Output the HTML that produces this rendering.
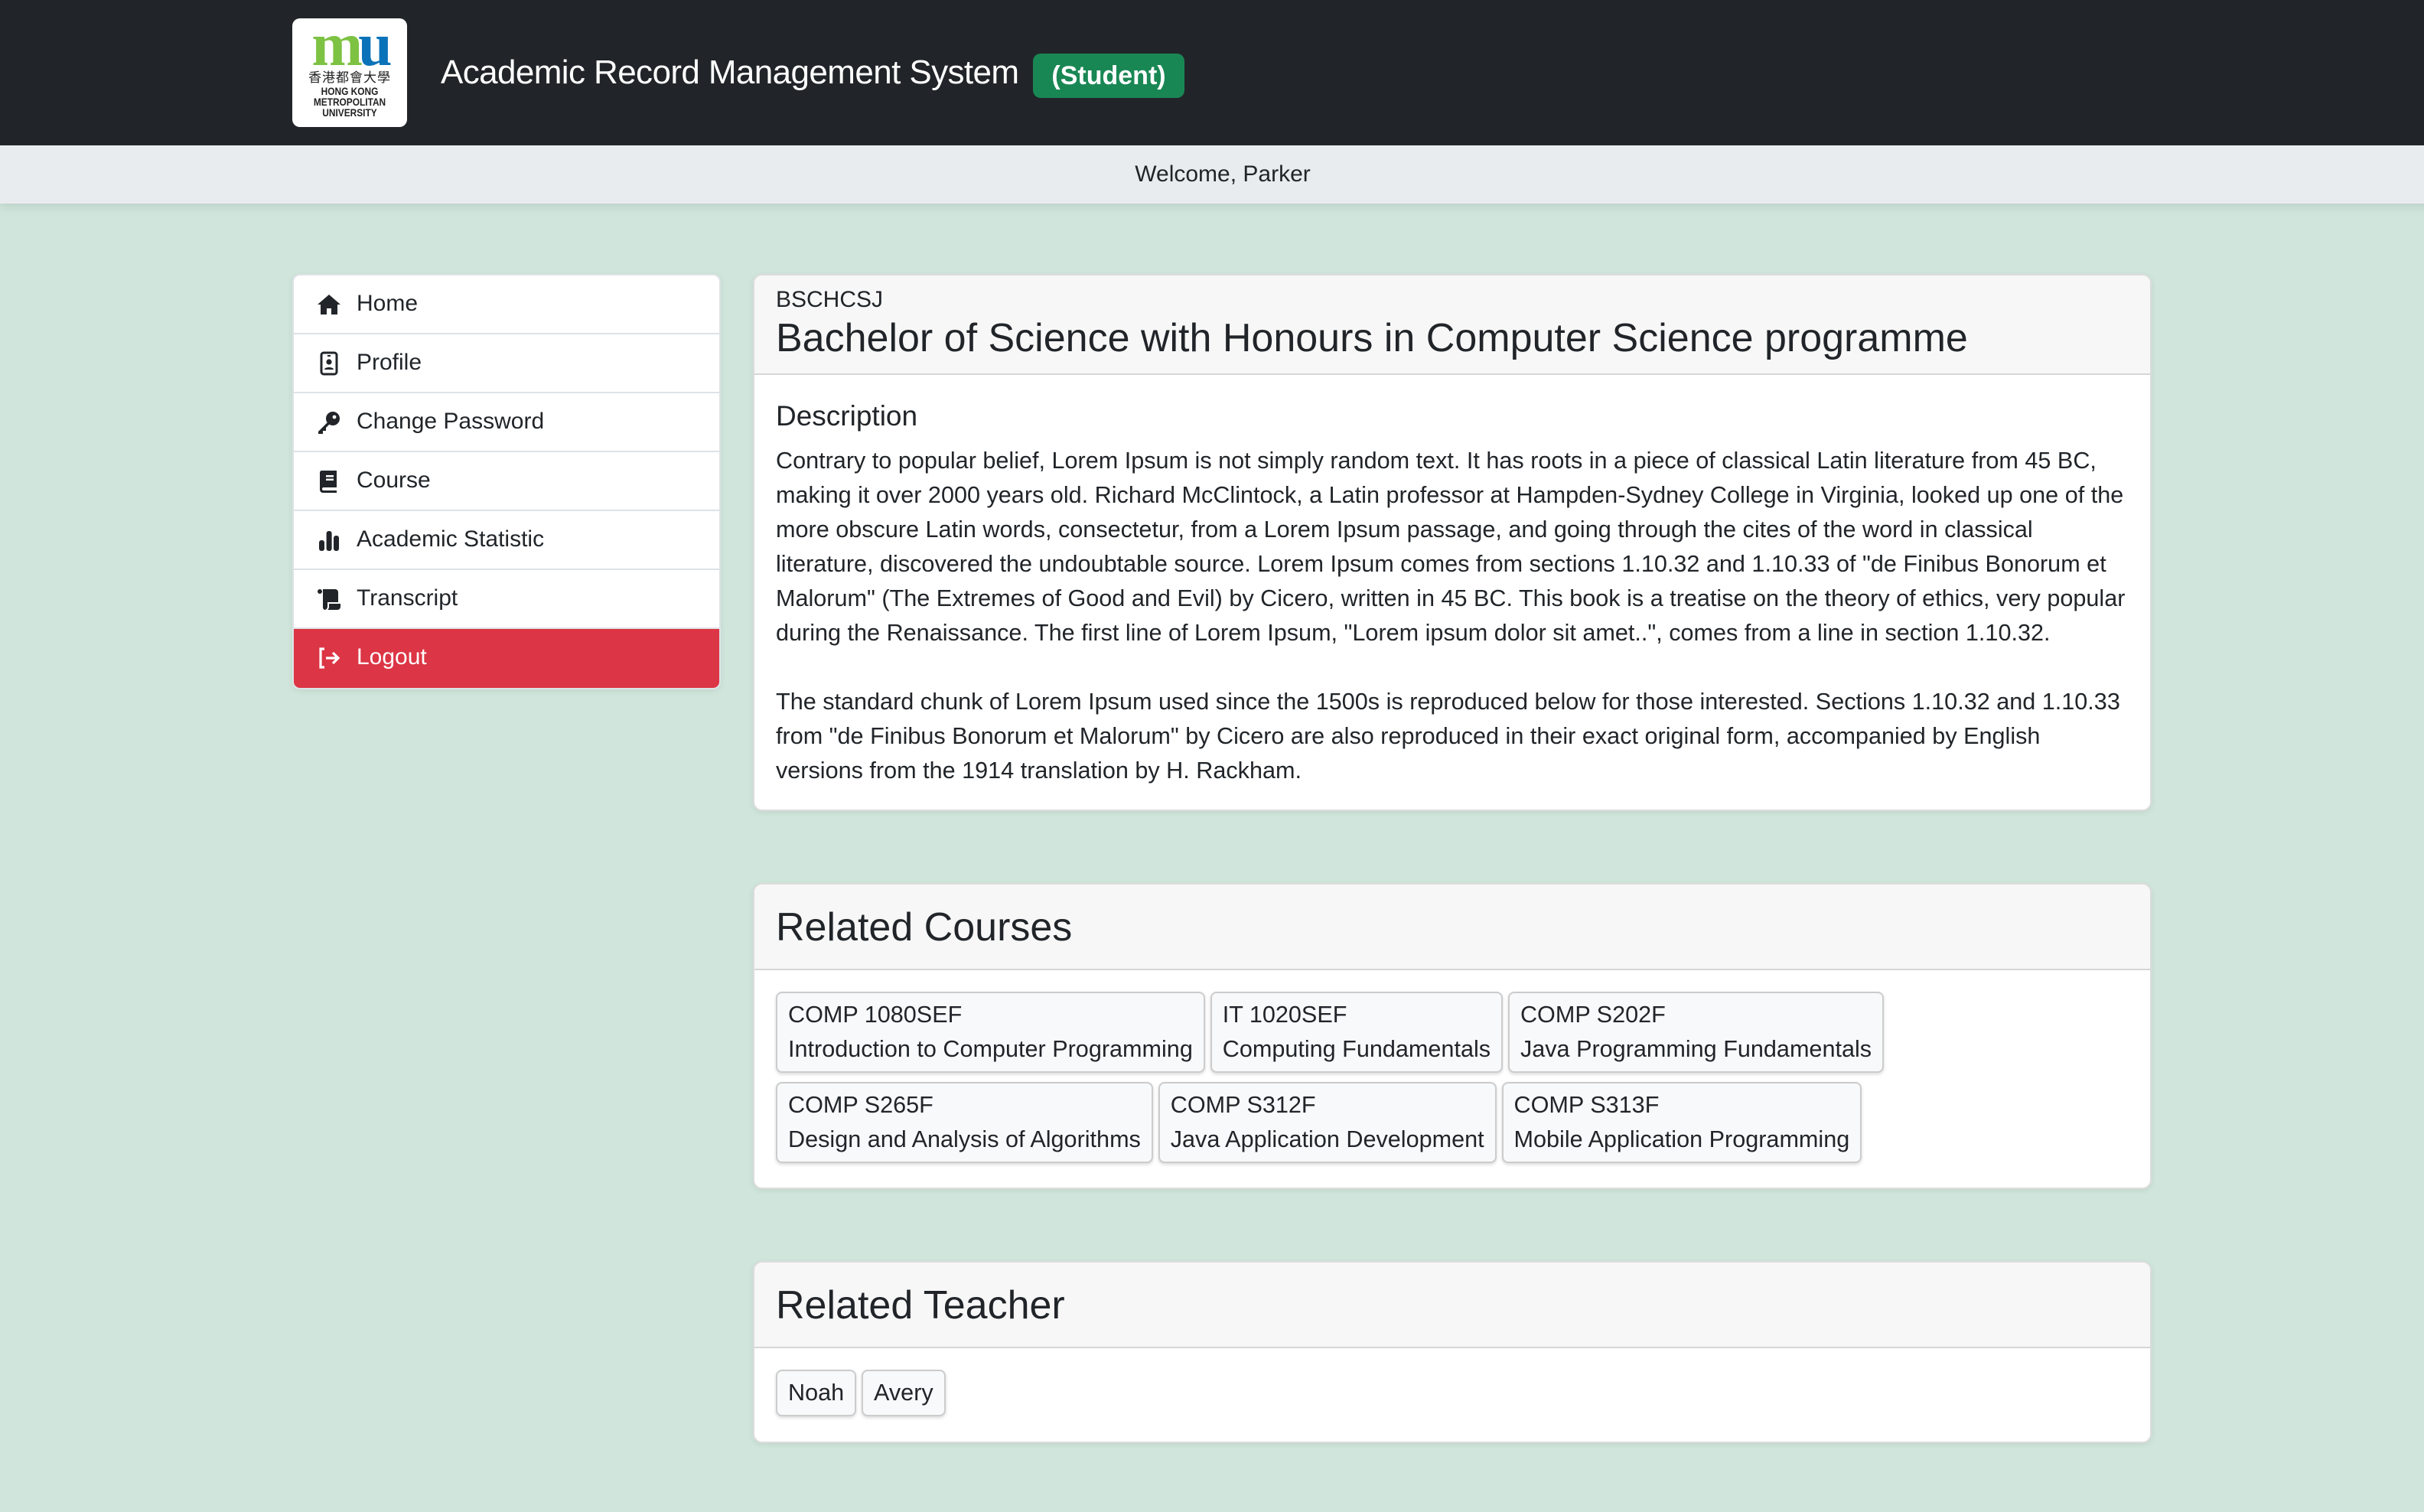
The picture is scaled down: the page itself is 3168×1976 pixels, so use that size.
<!DOCTYPE html>
<html><head><meta charset="utf-8"><style>
*{box-sizing:border-box;margin:0;padding:0}
html,body{width:3168px;height:1976px;overflow:hidden}
body{background:#d0e6dc;font-family:"Liberation Sans","Noto Sans CJK TC",sans-serif;color:#212529}
#w{zoom:2;width:1584px;height:988px;position:relative}
.hdr{position:absolute;left:0;top:0;width:1584px;height:95px;background:#212529}
.logo{position:absolute;left:191px;top:12px;width:75px;height:71px;background:#fff;border-radius:5px;text-align:center;overflow:hidden}
.logo .m{font-family:"Liberation Serif",serif;font-weight:bold;font-size:40px;line-height:33px;letter-spacing:-3px;margin-top:1px}
.logo .cn{font-size:8.5px;line-height:10px;color:#222;letter-spacing:0.5px}
.logo .en{font-size:7px;line-height:7px;color:#222;font-weight:bold;transform:scaleX(0.85)}
.ttl{position:absolute;left:288px;top:35px;color:#fff;font-size:22px;letter-spacing:-0.3px}
.badge{position:absolute;left:675px;top:35px;width:99px;height:29px;background:#198754;color:#fff;border-radius:5px;font-weight:bold;font-size:17px;text-align:center;line-height:29px}
.wel{position:absolute;left:0;top:95px;width:1598px;height:38px;background:#e9ecef;text-align:center;font-size:15px;line-height:38px;box-shadow:0 2px 6px rgba(0,0,0,.1)}
.side{position:absolute;left:191px;top:179px;width:280px;background:#fff;border:1px solid #dee2e6;border-radius:5px;overflow:hidden;box-shadow:0 1px 4px rgba(0,0,0,.08)}
.side div{height:38.5px;border-bottom:1px solid #dee2e6;font-size:15px;line-height:37px;padding-left:41px;position:relative}
.side div svg{position:absolute;left:15px;top:11px;width:16px;height:16px}
.side .lo{background:#dc3545;color:#fff;border:none}
.card{position:absolute;left:492px;width:914px;background:#fff;border:1px solid #dcdcdc;border-radius:6px;overflow:hidden;box-shadow:0 1px 4px rgba(0,0,0,.08)}
.ch{background:#f7f7f7;border-bottom:1px solid #d6d6d6;padding:0 14px}
.cb{padding:0 14px}
p{font-size:15.3px;line-height:22.5px}
.btn{display:inline-block;background:#f8f9fa;border:1px solid #ccc;border-radius:4px;box-shadow:0 1px 2px rgba(0,0,0,.15);padding:3px 7px;font-size:15.3px;line-height:22.5px;margin-right:-1px;vertical-align:top}
</style></head><body><div id="w">
<div class="hdr">
<div class="logo"><div class="m"><span style="color:#7dc242">m</span><span style="color:#0a72b8">u</span></div><div class="cn">香港都會大學</div><div class="en">HONG KONG<br>METROPOLITAN<br>UNIVERSITY</div></div>
<div class="ttl">Academic Record Management System</div>
<div class="badge">(Student)</div>
</div>
<div class="wel">Welcome, Parker</div>
<div class="side">
<div><svg viewBox="0 0 16 16"><path d="M8 1.5L0.5 8h2v6.5h4v-4h3v4h4V8h2z" fill="#212529"/></svg>Home</div>
<div><svg viewBox="0 0 16 16"><rect x="3" y="1" width="10" height="14" rx="1.5" fill="none" stroke="#212529" stroke-width="1.5"/><circle cx="8" cy="7" r="1.8" fill="#212529"/><path d="M5 12c0-2 6-2 6 0z" fill="#212529"/><rect x="7" y="2.5" width="2" height="1" fill="#212529"/></svg>Profile</div>
<div><svg viewBox="0 0 16 16"><circle cx="10.5" cy="5.5" r="4.5" fill="#212529"/><path d="M7 8L1 14v1.5h3v-2h2v-2l3-3z" fill="#212529"/><circle cx="11.5" cy="4.5" r="1.2" fill="#fff"/></svg>Change Password</div>
<div><svg viewBox="0 0 16 16"><path d="M3 1h10v11H4.5a1 1 0 000 2H13v1.5H4a2 2 0 01-2-2V2.5A1.5 1.5 0 013 1z" fill="#212529"/><rect x="6" y="4" width="5" height="1.2" fill="#fff"/><rect x="6" y="6.3" width="5" height="1.2" fill="#fff"/></svg>Course</div>
<div><svg viewBox="0 0 16 16"><rect x="1.5" y="8" width="3.5" height="7" rx="1.5" fill="#212529"/><rect x="6.3" y="2" width="3.5" height="13" rx="1.5" fill="#212529"/><rect x="11" y="5" width="3.5" height="10" rx="1.5" fill="#212529"/></svg>Academic Statistic</div>
<div><svg viewBox="0 0 16 16"><circle cx="2" cy="3" r="1.5" fill="#212529"/><path d="M4 1.5h8a2 2 0 012 2V10H7v3a2 2 0 01-2 2 2 2 0 01-1-1.5z" fill="#212529"/><path d="M8 11h7.5v2a2 2 0 01-2 2H7a2.5 2.5 0 001-2z" fill="#212529"/></svg>Transcript</div>
<div class="lo"><svg viewBox="0 0 16 16"><path d="M5 2H2.5v12H5" fill="none" stroke="#fff" stroke-width="1.6"/><path d="M6 8h8M10.5 4.5L14 8l-3.5 3.5" fill="none" stroke="#fff" stroke-width="1.6"/></svg>Logout</div>
</div>

<div class="card" style="top:179px;height:351px">
<div class="ch" style="height:65px;padding-top:7px"><div style="font-size:15px;line-height:18px">BSCHCSJ</div><div style="font-size:26px;line-height:32px">Bachelor of Science with Honours in Computer Science programme</div></div>
<div class="cb" style="padding-top:15px"><div style="font-size:18.5px;line-height:24px;margin-bottom:6px">Description</div>
<p>Contrary to popular belief, Lorem Ipsum is not simply random text. It has roots in a piece of classical Latin literature from 45 BC, making it over 2000 years old. Richard McClintock, a Latin professor at Hampden-Sydney College in Virginia, looked up one of the more obscure Latin words, consectetur, from a Lorem Ipsum passage, and going through the cites of the word in classical literature, discovered the undoubtable source. Lorem Ipsum comes from sections 1.10.32 and 1.10.33 of "de Finibus Bonorum et Malorum" (The Extremes of Good and Evil) by Cicero, written in 45 BC. This book is a treatise on the theory of ethics, very popular during the Renaissance. The first line of Lorem Ipsum, "Lorem ipsum dolor sit amet..", comes from a line in section 1.10.32.</p>
<p style="margin-top:22.5px">The standard chunk of Lorem Ipsum used since the 1500s is reproduced below for those interested. Sections 1.10.32 and 1.10.33 from "de Finibus Bonorum et Malorum" by Cicero are also reproduced in their exact original form, accompanied by English versions from the 1914 translation by H. Rackham.</p></div>
</div>

<div class="card" style="top:577px;height:200px">
<div class="ch" style="height:56px;font-size:26px;line-height:56px">Related Courses</div>
<div class="cb" style="padding-top:14px">
<div style="margin-bottom:6px"><span class="btn">COMP 1080SEF<br>Introduction to Computer Programming</span> <span class="btn">IT 1020SEF<br>Computing Fundamentals</span> <span class="btn">COMP S202F<br>Java Programming Fundamentals</span></div>
<div><span class="btn">COMP S265F<br>Design and Analysis of Algorithms</span> <span class="btn">COMP S312F<br>Java Application Development</span> <span class="btn">COMP S313F<br>Mobile Application Programming</span></div>
</div></div>

<div class="card" style="top:824px;height:119px">
<div class="ch" style="height:56px;font-size:26px;line-height:56px">Related Teacher</div>
<div class="cb" style="padding-top:14px"><span class="btn">Noah</span> <span class="btn">Avery</span></div>
</div>
</div></body></html>
